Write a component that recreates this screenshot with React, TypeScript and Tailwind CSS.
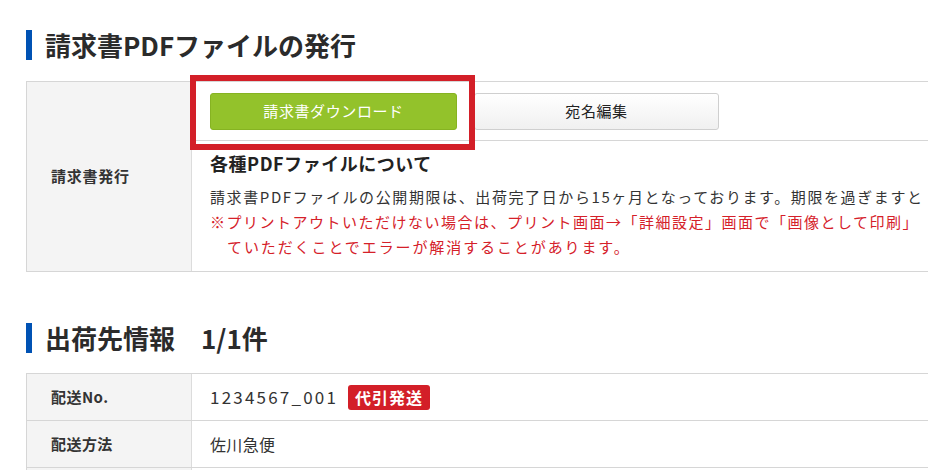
const FONT = "font-['Noto_Sans_CJK_JP','Noto_Sans',sans-serif]";

function SectionTitle({ children }: { children: React.ReactNode }) {
  return (
    <div className="flex items-center gap-[13px] h-[30px]">
      <span className="block w-[6px] h-[30px] bg-[#0052b4]" />
      <h2 className="text-[26px] font-bold leading-[30px] text-[#2b2b2b] whitespace-pre">{children}</h2>
    </div>
  );
}

function Row({ label, children, last }: { label: string; children: React.ReactNode; last?: boolean }) {
  return (
    <div className={`grid grid-cols-[165px_1fr] ${last ? '' : 'border-b border-[#d6d6d6]'}`}>
      <div className="bg-[#f4f4f4] border-r border-[#dcdcdc] flex items-center pl-[24px] text-[15px] font-bold tracking-[0.03em] text-[#333]">
        {label}
      </div>
      <div className="flex items-center pl-[18px] text-[16px] text-[#333] tracking-[0.02em]">{children}</div>
    </div>
  );
}

export default function App() {
  return (
    <div className={`w-[928px] h-[470px] overflow-hidden bg-white ${FONT}`}>
      <div className="w-[1200px] pl-[26px] pt-[30px]">
        <SectionTitle>請求書PDFファイルの発行</SectionTitle>

        {/* 請求書発行テーブル */}
        <div className="relative mt-[21px] border-t border-l border-b border-[#d6d6d6]">
          <div className="grid grid-cols-[165px_1fr] h-[189px]">
            <div className="bg-[#f4f4f4] border-r border-[#dcdcdc] flex items-center pl-[24px] text-[15px] font-bold tracking-[0.05em] text-[#333]">
              請求書発行
            </div>
            <div className="flex flex-col">
              <div className="flex gap-[17px] pl-[18px] pt-[11px] pb-[10px] border-b border-[#d6d6d6]">
                <button className="w-[247px] h-[37px] rounded-[3px] bg-[#93c22b] border border-[#86b322] text-white text-[15px] tracking-[0.04em]">
                  請求書ダウンロード
                </button>
                <button className="w-[245px] h-[37px] rounded-[3px] bg-gradient-to-b from-white to-[#f0f0f0] border border-[#cfcfcf] text-[#222] text-[15px] tracking-[0.04em]">
                  宛名編集
                </button>
              </div>
              <div className="pl-[18px] pt-[9px] whitespace-nowrap">
                <p className="text-[18px] font-bold text-[#222] tracking-[0.03em] leading-[26px]">各種PDFファイルについて</p>
                <p className="mt-[8px] text-[15px] leading-[25px] tracking-[1.6px] text-[#333]">
                  請求書PDFファイルの公開期限は、出荷完了日から15ヶ月となっております。期限を過ぎますと
                </p>
                <p className="text-[15px] leading-[25px] tracking-[1.5px] text-[#d52029]">
                  ※プリントアウトいただけない場合は、プリント画面→「詳細設定」画面で「画像として印刷」
                </p>
                <p className="pl-[17px] text-[15px] leading-[25px] tracking-[1.9px] text-[#d52029]">
                  ていただくことでエラーが解消することがあります。
                </p>
              </div>
            </div>
          </div>
          {/* 注目枠 */}
          <div className="absolute left-[163px] top-[-7px] w-[285px] h-[75px] border-[6px] border-[#d31f28] pointer-events-none" />
        </div>

        <div className="mt-[51px]">
          <SectionTitle>出荷先情報　1/1件</SectionTitle>
        </div>

        {/* 出荷先テーブル */}
        <div className="mt-[20px] border-t border-l border-[#d6d6d6]">
          <div className="h-[47px] grid">
            <Row label="配送No.">
              <span className="text-[17px] tracking-[2.2px]">1234567_001</span>
              <span className="ml-[10px] inline-flex items-center h-[25px] px-[7px] rounded-[3px] bg-[#d31f28] text-white text-[16px] font-bold tracking-[0.06em]">
                代引発送
              </span>
            </Row>
          </div>
          <div className="h-[47px] grid">
            <Row label="配送方法">佐川急便</Row>
          </div>
          <div className="h-[47px] grid">
            <Row label="" last>
              {' '}
            </Row>
          </div>
        </div>
      </div>
    </div>
  );
}
